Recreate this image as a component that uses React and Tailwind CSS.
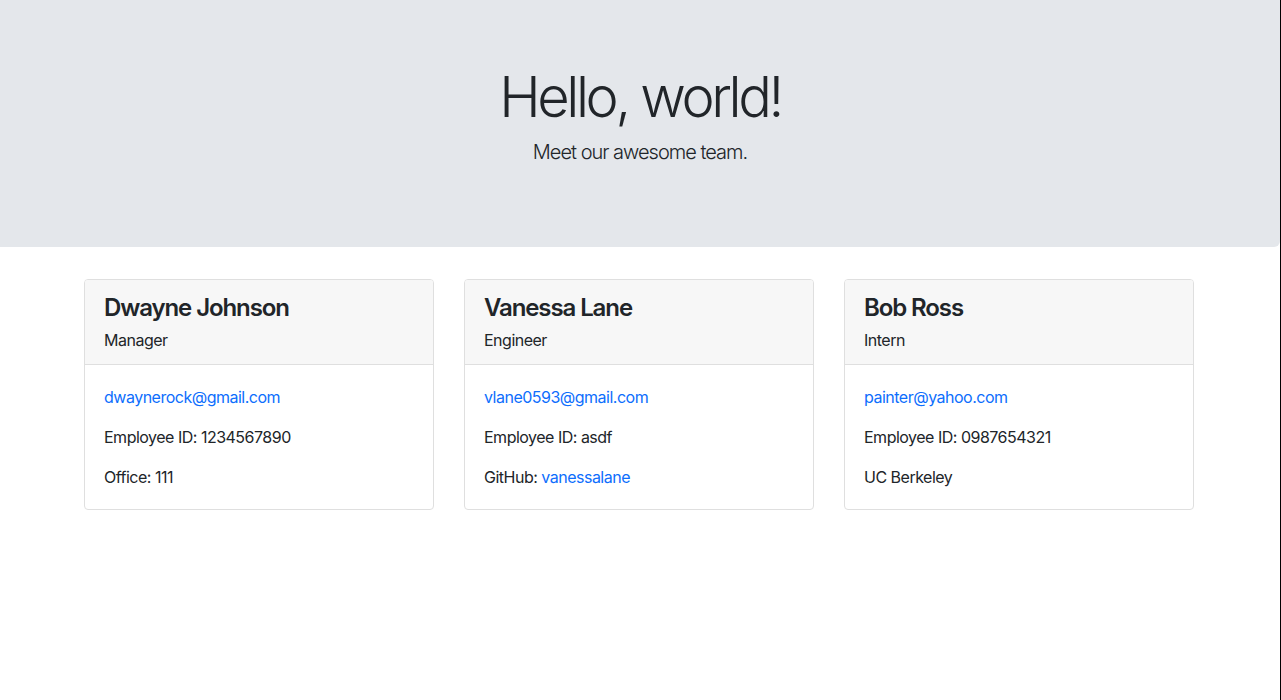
const team = [
  {
    name: 'Dwayne Johnson',
    role: 'Manager',
    email: 'dwaynerock@gmail.com',
    id: '1234567890',
    extra: <>Office: 111</>,
  },
  {
    name: 'Vanessa Lane',
    role: 'Engineer',
    email: 'vlane0593@gmail.com',
    id: 'asdf',
    extra: (
      <>
        GitHub: <a href="#" className="text-[#0d6efd]">vanessalane</a>
      </>
    ),
  },
  {
    name: 'Bob Ross',
    role: 'Intern',
    email: 'painter@yahoo.com',
    id: '0987654321',
    extra: <>UC Berkeley</>,
  },
];

export default function App() {
  return (
    <div className="min-h-[700px] border-r border-black bg-white text-[#212529] font-['Inter','Liberation_Sans',sans-serif]">
      <header className="mb-8 rounded-br-md bg-[#e4e7eb] px-8 pt-16 pb-16 text-center">
        <h1 className="mb-[6px] text-[56px] font-light leading-[1.2] tracking-[-3.4px]">Hello, world!</h1>
        <p className="mb-4 text-xl font-light leading-[1.5] tracking-[-1px]">Meet our awesome team.</p>
      </header>

      <main className="ml-[84px] grid w-[1110px] grid-cols-3 gap-[30px]">
        {team.map(member => (
          <Card key={member.name} member={member} />
        ))}
      </main>
    </div>
  );
}

function Card({ member }) {
  return (
    <section className="overflow-hidden rounded-[4px] border border-[#dfdfdf] tracking-[-0.5px]">
      <div className="border-b border-[#dfdfdf] bg-[#f7f7f7] py-3 pr-5 pl-[19px]">
        <h2 className="mb-[5px] pt-[2px] text-2xl font-semibold leading-[1.2] tracking-[-1.1px]">{member.name}</h2>
        <p className="text-base leading-6">{member.role}</p>
      </div>
      <div className="space-y-4 py-5 pr-5 pl-[19px] text-base leading-6">
        <p>
          <a href="#" className="text-[#0d6efd]">{member.email}</a>
        </p>
        <p>Employee ID: {member.id}</p>
        <p>{member.extra}</p>
      </div>
    </section>
  );
}
